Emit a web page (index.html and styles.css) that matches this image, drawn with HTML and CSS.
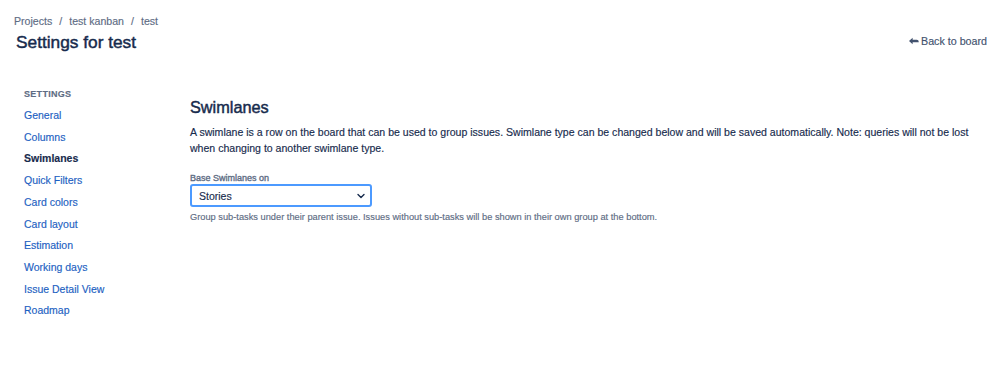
FILE: index.html
```html
<!DOCTYPE html>
<html lang="en">
<head>
  <meta charset="UTF-8" />
  <title>Settings for test</title>
  <link rel="stylesheet" href="styles.css">
</head>
<body>
  <header class="page-header">
    <nav class="breadcrumbs">
      <a href="#">Projects</a><span class="sep">/</span><a href="#">test kanban</a><span class="sep">/</span><a href="#">test</a>
    </nav>
    <div class="title-row">
      <h1>Settings for test</h1>
      <a class="back" href="#">
        <svg width="10" height="8" viewBox="0 0 11 8"><path d="M0 4 L4 0.5 L4 2.6 L8.5 2.6 C9.8 2.6 10.6 3.4 10.6 4.6 L10.6 5.6 C10.2 5 9.6 5.4 8.5 5.4 L4 5.4 L4 7.5 Z" fill="#42526e"/></svg>
        Back to board
      </a>
    </div>
  </header>

  <div class="layout">
    <aside class="sidebar">
      <div class="sidebar-title">Settings</div>
      <ul class="nav">
        <li><a href="#">General</a></li>
        <li><a href="#">Columns</a></li>
        <li class="active"><a href="#">Swimlanes</a></li>
        <li><a href="#">Quick Filters</a></li>
        <li><a href="#">Card colors</a></li>
        <li><a href="#">Card layout</a></li>
        <li><a href="#">Estimation</a></li>
        <li><a href="#">Working days</a></li>
        <li><a href="#">Issue Detail View</a></li>
        <li><a href="#">Roadmap</a></li>
      </ul>
    </aside>

    <main class="content">
      <h2>Swimlanes</h2>
      <p class="intro">A swimlane is a row on the board that can be used to group issues. Swimlane type can be changed below and will be saved automatically. Note: queries will not be lost when changing to another swimlane type.</p>

      <div class="field">
        <label class="field-label">Base Swimlanes on</label>
        <div class="select">
          <span>Stories</span>
          <svg width="8" height="6" viewBox="0 0 8 6"><path d="M1 1.5 L4 4.5 L7 1.5" fill="none" stroke="#172b4d" stroke-width="1.4" stroke-linecap="round" stroke-linejoin="round"/></svg>
        </div>
        <div class="help">Group sub-tasks under their parent issue. Issues without sub-tasks will be shown in their own group at the bottom.</div>
      </div>
    </main>
  </div>
</body>
</html>
```

FILE: styles.css
```css
body {
  margin: 0;
  background: #fff;
  font-family: "Liberation Sans", Arial, sans-serif;
  color: #172b4d;
  -webkit-text-stroke: 0.15px;
}

a {
  text-decoration: none;
}

.page-header {
  padding: 14px 12px 0 14px;
}

.breadcrumbs {
  font-size: 10.6px;
  line-height: 14px;
  color: #5e6c84;
}

.breadcrumbs a {
  color: #5e6c84;
}

.breadcrumbs .sep {
  padding: 0 7px;
}

.title-row {
  display: flex;
  justify-content: space-between;
  align-items: center;
  margin-top: 2px;
  padding-left: 2px;
}

h1 {
  margin: 0;
  font-size: 17.3px;
  font-weight: 400;
  line-height: 24px;
  color: #172b4d;
  -webkit-text-stroke: 0.45px;
}

.back {
  display: flex;
  align-items: center;
  gap: 2px;
  font-size: 10.7px;
  color: #42526e;
  margin-top: -2px;
}

.layout {
  display: flex;
  padding: 33px 0 0 24px;
}

.sidebar {
  width: 166px;
  flex-shrink: 0;
}

.sidebar-title {
  font-size: 9px;
  font-weight: 700;
  letter-spacing: 0.3px;
  text-transform: uppercase;
  color: #5e6c84;
  line-height: 14px;
}

.nav {
  list-style: none;
  margin: 4px 0 0;
  padding: 0;
}

.nav li {
  font-size: 10.5px;
  line-height: 21.7px;
}

.nav a {
  color: #1d5fc2;
}

.nav .active a {
  color: #172b4d;
  font-weight: 700;
}

.content {
  flex: 1;
  padding-top: 8px;
  padding-right: 20px;
}

h2 {
  margin: 0;
  font-size: 16.3px;
  font-weight: 400;
  line-height: 24px;
  color: #172b4d;
  -webkit-text-stroke: 0.45px;
}

.intro {
  margin: 5px 0 0;
  font-size: 10.55px;
  line-height: 16px;
  color: #172b4d;
}

.field {
  margin-top: 17px;
}

.field-label {
  display: block;
  font-size: 9px;
  font-weight: 400;
  line-height: 11px;
  color: #5e6c84;
  -webkit-text-stroke: 0.35px;
}

.select {
  box-sizing: border-box;
  width: 182px;
  height: 23px;
  margin-top: 0;
  border: 2px solid #4c9aff;
  border-radius: 3px;
  display: flex;
  align-items: center;
  justify-content: space-between;
  padding: 0 5px 0 7px;
  font-size: 10.5px;
  color: #172b4d;
}

.help {
  margin-top: 4px;
  font-size: 9.28px;
  line-height: 12px;
  color: #5e6c84;
}
```
